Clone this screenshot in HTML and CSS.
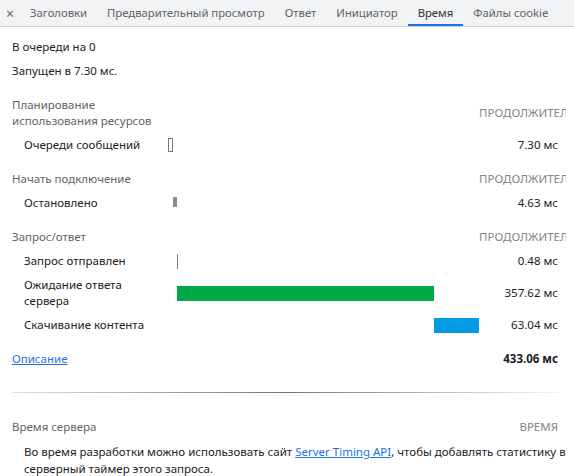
FILE: index.html
```html
<!DOCTYPE html>
<html lang="ru">
<head>
<meta charset="utf-8">
<link rel="stylesheet" href="styles.css">
</head>
<body>
<div class="tabs">
  <div class="close">×</div>
  <div class="tab">Заголовки</div>
  <div class="tab">Предварительный просмотр</div>
  <div class="tab">Ответ</div>
  <div class="tab">Инициатор</div>
  <div class="tab active">Время</div>
  <div class="tab">Файлы cookie</div>
</div>
<div class="content">
  <div class="info">В очереди на 0</div>
  <div class="info">Запущен в 7.30 мс.</div>

  <div class="trow head">
    <div class="label">Планирование использования ресурсов</div>
    <div class="bar-cell"></div>
    <div class="value">ПРОДОЛЖИТЕЛЬНОСТЬ</div>
  </div>
  <div class="trow item">
    <div class="label">Очереди сообщений</div>
    <div class="bar-cell"><div class="bar queue" style="left:0%;width:1.686%"></div></div>
    <div class="value">7.30 мс</div>
  </div>

  <div class="trow head">
    <div class="label">Начать подключение</div>
    <div class="bar-cell"></div>
    <div class="value">ПРОДОЛЖИТЕЛЬНОСТЬ</div>
  </div>
  <div class="trow item">
    <div class="label">Остановлено</div>
    <div class="bar-cell"><div class="bar stalled" style="left:1.686%;width:1.069%"></div></div>
    <div class="value">4.63 мс</div>
  </div>

  <div class="trow head">
    <div class="label">Запрос/ответ</div>
    <div class="bar-cell"></div>
    <div class="value">ПРОДОЛЖИТЕЛЬНОСТЬ</div>
  </div>
  <div class="trow item">
    <div class="label">Запрос отправлен</div>
    <div class="bar-cell"><div class="bar sending" style="left:2.755%;width:0.111%"></div></div>
    <div class="value">0.48 мс</div>
  </div>
  <div class="trow item">
    <div class="label">Ожидание ответа сервера</div>
    <div class="bar-cell"><div class="bar waiting" style="left:2.866%;width:82.58%"></div></div>
    <div class="value">357.62 мс</div>
  </div>
  <div class="trow item">
    <div class="label">Скачивание контента</div>
    <div class="bar-cell"><div class="bar receiving" style="left:85.44%;width:14.56%"></div></div>
    <div class="value">63.04 мс</div>
  </div>

  <div class="trow foot">
    <div class="label"><a href="#" class="link">Описание</a></div>
    <div class="bar-cell"></div>
    <div class="value total">433.06 мс</div>
  </div>

  <div class="sep"></div>

  <div class="server-head">
    <div>Время сервера</div>
    <div class="server-col">ВРЕМЯ</div>
  </div>
  <p class="server-note">Во время разработки можно использовать сайт <a href="#" class="link">Server Timing API</a>, чтобы добавлять статистику в серверный таймер этого запроса.</p>
</div>
</body>
</html>
```
FILE: styles.css
```css
html, body {
  margin: 0;
  padding: 0;
  background: #fff;
}
body {
  font-family: "Segoe UI", "Noto Sans", "Open Sans", sans-serif;
  font-size: 11.5px;
  line-height: 16px;
  color: #202124;
  width: 574px;
  overflow: hidden;
}
.tabs {
  display: flex;
  align-items: stretch;
  height: 26px;
  background: #f1f3f4;
  border-bottom: 1px solid #cbcdd1;
  white-space: nowrap;
  overflow: hidden;
  font-size: 11.3px;
}
.close {
  flex-shrink: 0;
  width: 20px;
  display: flex;
  align-items: center;
  justify-content: center;
  color: #5f6368;
  font-size: 14px;
  padding-top: 1px;
}
.tab {
  flex-shrink: 0;
  padding: 2px 10px 0;
  display: flex;
  align-items: center;
  color: #5f6368;
  border-bottom: 2px solid transparent;
}
.tab.active {
  color: #333;
  border-bottom-color: #1a73e8;
}
.content {
  padding-top: 8px;
}
.info {
  padding: 4px 12px;
  height: 16px;
}
.trow {
  display: grid;
  grid-template-columns: 156px 311px 87px;
  padding-left: 12px;
  align-items: center;
}
.trow.head {
  padding-top: 14px;
  padding-bottom: 4px;
  color: #5f6368;
}
.trow.head .label {
  padding-right: 10px;
}
.trow.item {
  min-height: 24px;
  padding-top: 4px;
  padding-bottom: 4px;
  box-sizing: border-box;
}
.trow.item .label {
  padding-left: 12px;
  padding-right: 14px;
}
.trow.foot {
  padding-top: 14px;
  padding-bottom: 4px;
}
.bar-cell {
  position: relative;
  align-self: stretch;
}
.bar {
  position: absolute;
  top: 50%;
  height: 15px;
  margin-top: -7.5px;
  min-width: 1px;
  box-sizing: border-box;
}
.bar.queue {
  background: #fff;
  border: 1px solid #777;
  height: 14px;
  margin-top: -7px;
}
.bar.stalled {
  background: #8c8c8c;
  height: 10px;
  margin-top: -6px;
}
.bar.sending {
  background: #6f8a8a;
}
.bar.waiting {
  background: #00a846;
}
.bar.receiving {
  background: #039be5;
}
.value {
  text-align: right;
  padding-right: 8px;
  overflow: hidden;
  white-space: nowrap;
}
.head .value {
  color: #80868b;
}
.total {
  font-weight: bold;
}
.link {
  color: #1a73e8;
  text-decoration: underline;
}
.sep {
  height: 1px;
  margin: 21px 14px 0 12px;
  background: linear-gradient(to right, rgba(0,0,0,0.12), rgba(0,0,0,0.55) 50%, rgba(0,0,0,0.04));
}
.server-head {
  display: flex;
  justify-content: space-between;
  padding: 26px 16px 0 12px;
  color: #5f6368;
}
.server-col {
  color: #80868b;
}
.server-note {
  margin: 8px 8px 0 24px;
  line-height: 17px;
}
```
